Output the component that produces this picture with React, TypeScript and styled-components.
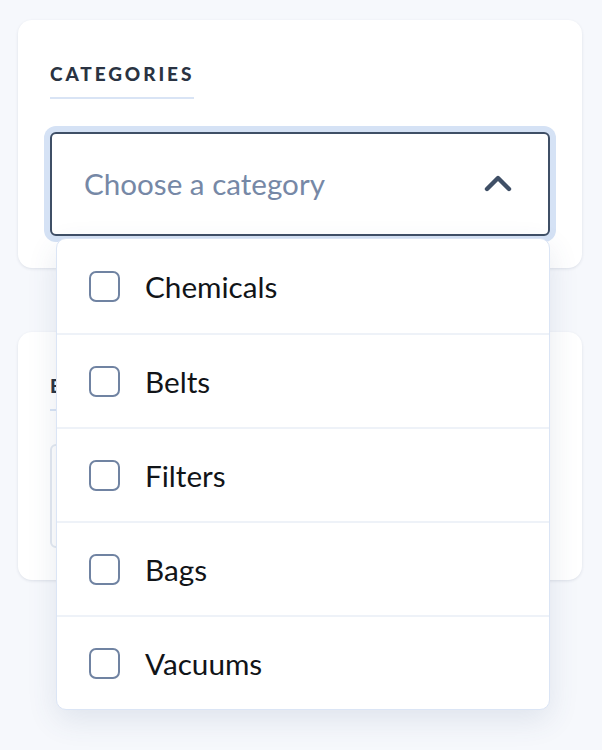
import React from 'react';
import styled, { createGlobalStyle } from 'styled-components';

const GlobalStyle = createGlobalStyle`
  html, body {
    margin: 0;
    background: #f6f8fc;
    font-family: Lato, "Noto Sans", sans-serif;
  }
`;

const categories = ['Chemicals', 'Belts', 'Filters', 'Bags', 'Vacuums'];

const Page = styled.div`
  display: flex;
  flex-direction: column;
  gap: 64px;
  min-height: 750px;
  box-sizing: border-box;
  padding: 20px 20px 0 18px;
`;

const Card = styled.section<{ $raised?: boolean }>`
  position: relative;
  z-index: ${p => (p.$raised ? 2 : 1)};
  background: #fff;
  border-radius: 14px;
  box-shadow: 0 1px 3px rgba(40, 60, 90, 0.12);
  padding: 42px 32px 32px;
`;

const Title = styled.h3`
  display: inline-block;
  margin: 0 0 33px;
  padding-bottom: 12px;
  border-bottom: 2px solid #d9e4f5;
  font-size: 19px;
  line-height: 23px;
  font-weight: 900;
  letter-spacing: 2.9px;
  color: #2a3342;
`;

const SelectWrap = styled.div`
  position: relative;
`;

const SelectBox = styled.div<{ $open?: boolean }>`
  display: flex;
  align-items: center;
  justify-content: space-between;
  height: 104px;
  box-sizing: border-box;
  padding: 0 36px 2px 32px;
  border: 2px solid ${p => (p.$open ? '#3f4f66' : '#e3e9f1')};
  border-radius: 6px;
  box-shadow: ${p => (p.$open ? '0 0 0 6px #d5e2f5' : 'none')};
  background: #fff;
`;

const Placeholder = styled.span`
  font-size: 29.6px;
  color: #7688a6;
`;

const Dropdown = styled.ul`
  position: absolute;
  top: 106px;
  left: 6px;
  right: 0;
  margin: 0;
  padding: 0;
  list-style: none;
  background: #fff;
  border: 1px solid #dbe5f5;
  border-radius: 10px;
  box-shadow: 0 10px 30px rgba(60, 80, 120, 0.12);
`;

const Option = styled.li`
  display: flex;
  align-items: center;
  gap: 25px;
  height: 94px;
  padding-left: 32px;
  border-top: 2px solid #eef2f8;
  box-sizing: border-box;
  font-size: 29.7px;
  color: #111418;

  &:first-child {
    border-top: none;
  }
`;

const Checkbox = styled.span`
  width: 31px;
  height: 31px;
  box-sizing: border-box;
  border: 2px solid #7083a2;
  border-radius: 7px;
  background: #fff;
  flex-shrink: 0;
`;

const Chevron = () => (
  <svg width="28" height="20" viewBox="0 0 28 20" fill="none">
    <path d="M3 16 L14 5 L25 16" stroke="#3f4f66" strokeWidth="4.4" strokeLinecap="round" strokeLinejoin="round" />
  </svg>
);

export default function App() {
  return (
    <>
      <GlobalStyle />
      <Page>
        <Card $raised>
          <Title>CATEGORIES</Title>
          <SelectWrap>
            <SelectBox $open>
              <Placeholder>Choose a category</Placeholder>
              <Chevron />
            </SelectBox>
            <Dropdown>
              {categories.map(c => (
                <Option key={c}>
                  <Checkbox />
                  {c}
                </Option>
              ))}
            </Dropdown>
          </SelectWrap>
        </Card>
        <Card>
          <Title>BRANDS</Title>
          <SelectBox>
            <Placeholder>Choose a brand</Placeholder>
          </SelectBox>
        </Card>
      </Page>
    </>
  );
}
